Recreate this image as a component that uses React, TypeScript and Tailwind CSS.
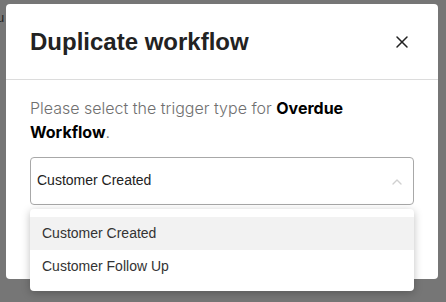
import { X, ChevronUp } from 'lucide-react';

const options = ['Customer Created', 'Customer Follow Up'];

export default function App() {
  return (
    <div className="relative w-[446px] h-[302px] overflow-hidden bg-[#767676] pl-[6px] pt-[4px]">
      <span className="absolute left-[-3px] top-[8px] text-[13px] text-[#222] font-['Liberation_Sans',sans-serif]">u</span>
      <div className="relative w-[432px] h-[275px] bg-white rounded-[4px]">
        <div className="flex items-center justify-between h-[76px] pl-[24px] pr-[26px] pt-[1px] border-b border-[#dcdcdc]">
          <h2 className="text-[24px] font-bold text-[#222] font-['Liberation_Sans',Arial,sans-serif]">
            Duplicate workflow
          </h2>
          <X className="w-[20px] h-[20px] text-[#222]" strokeWidth={1.8} />
        </div>
        <div className="px-[24px] pt-[16px]">
          <p className="text-[16px] leading-[24px] text-[#707070] font-light font-['Inter',sans-serif]">
            Please select the trigger type for <span className="font-bold text-black">Overdue Workflow</span>.
          </p>
          <div className="relative mt-[13px]">
            <div className="flex items-center justify-between h-[48px] border border-[#a8a8a8] rounded-[4px] pl-[6px] pr-[8px]">
              <span className="text-[14px] text-[#222] font-['Liberation_Sans',Arial,sans-serif] mb-[2px]">Customer Created</span>
              <ChevronUp className="w-[16px] h-[16px] text-[#d0d0d0] mt-[2px]" strokeWidth={2} />
            </div>
            <div className="absolute left-0 right-0 top-[52px] bg-white rounded-[4px] shadow-[0_2px_8px_rgba(0,0,0,0.25)] py-[8px] z-10">
              {options.map((o, i) => (
                <div
                  key={o}
                  className={`h-[33px] flex items-center pl-[12px] text-[14px] text-[#333] font-['Liberation_Sans',Arial,sans-serif] ${i === 0 ? 'bg-[#f2f2f2]' : ''}`}
                >
                  {o}
                </div>
              ))}
            </div>
          </div>
        </div>
      </div>
    </div>
  );
}
